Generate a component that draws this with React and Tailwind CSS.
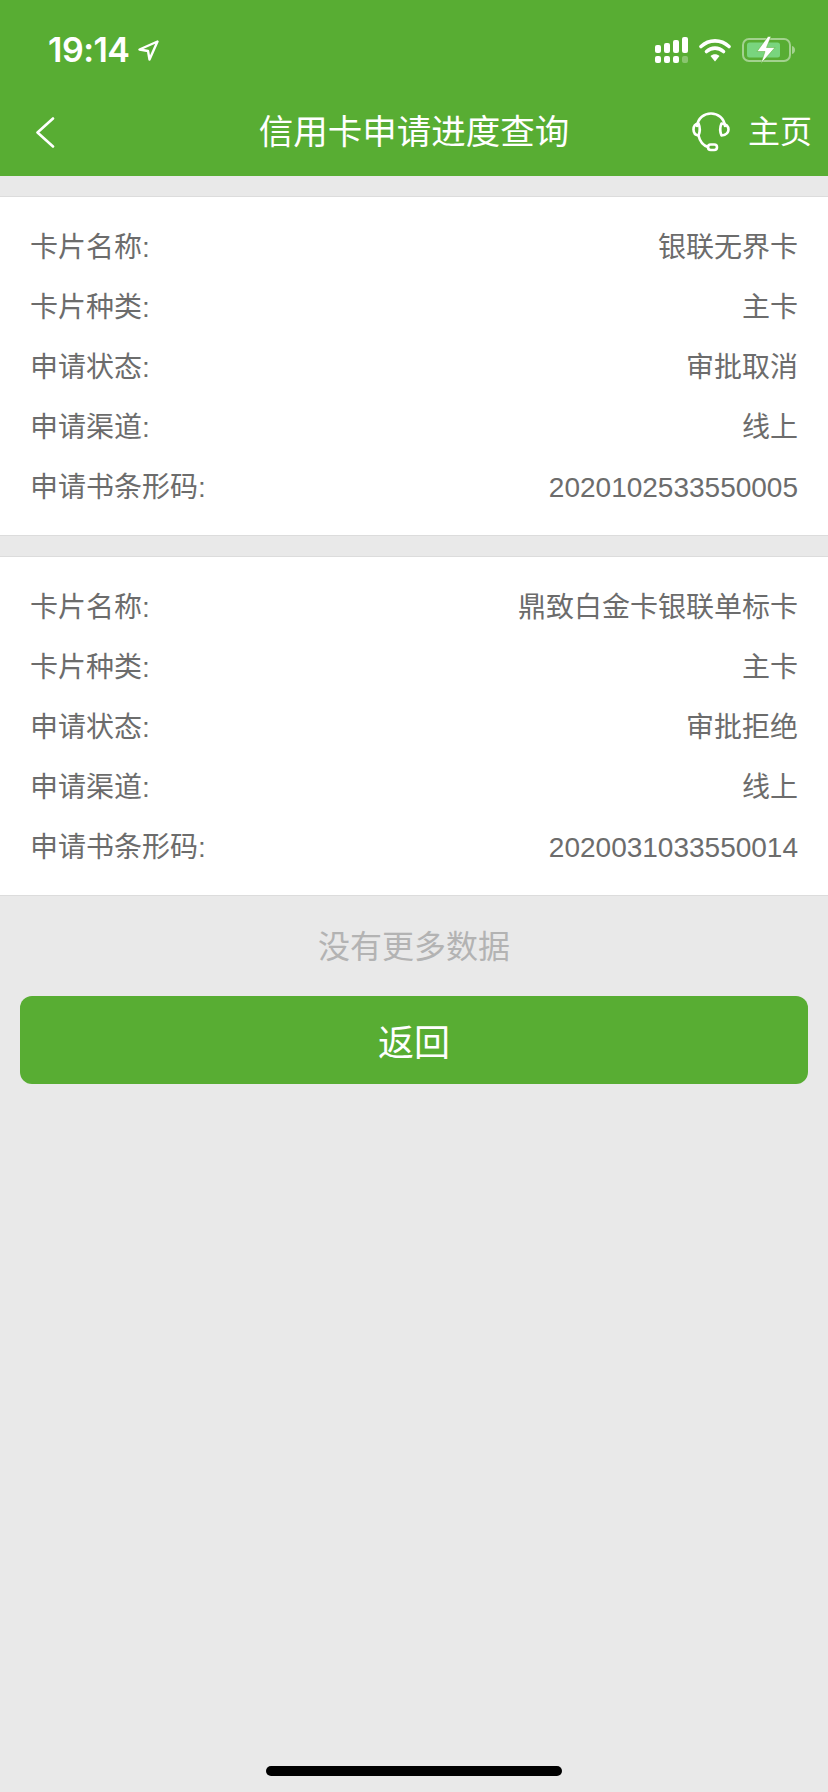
const FONT = "font-['Liberation_Sans','Noto_Sans_CJK_SC',sans-serif]";

function Row({ label, value }) {
  return (
    <div className="flex h-[60px] items-center justify-between pt-[3px] text-[28px] text-[#6c6c6c]">
      <span>{label}</span>
      <span>{value}</span>
    </div>
  );
}

function Card({ rows }) {
  return (
    <section className="border-y border-[#dcdcdc] bg-white px-[30px] py-[19px]">
      {rows.map(([l, v]) => (
        <Row key={l} label={l} value={v} />
      ))}
    </section>
  );
}

function LocationArrow() {
  return (
    <svg width="21" height="21" viewBox="0 0 21 21" fill="none">
      <path d="M19.500 1.500 1.500 9.500l8.500 1.500 1.500 8.500z" stroke="#fff" strokeWidth="2.400" strokeLinejoin="round" />
    </svg>
  );
}

function Signal() {
  const xs = [0, 9, 18, 27];
  const tops = [8, 6, 3, 0];
  return (
    <svg width="33" height="26" viewBox="0 0 33 26">
      {xs.map((x, i) => (
        <rect key={x} x={x} y={tops[i]} width="6" height={16 - tops[i]} rx="2" fill="#fff" />
      ))}
      {xs.map((x, i) => (
        <rect key={x} x={x} y="19" width="6" height="7" rx="2" fill="#fff" fillOpacity={i === 3 ? 0.3 : 1} />
      ))}
    </svg>
  );
}

function Wifi() {
  return (
    <svg width="32" height="24" viewBox="0 0 32 24" fill="none">
      <path d="M2 8.500C10 1 22 1 30 8.500" stroke="#fff" strokeWidth="3.600" strokeLinecap="round" />
      <path d="M7.500 13.500C12.500 9 19.500 9 24.500 13.500" stroke="#fff" strokeWidth="3.600" strokeLinecap="round" />
      <path d="M11.500 18 16 23.500 20.500 18C18 15.800 14 15.800 11.500 18z" fill="#fff" />
    </svg>
  );
}

function Battery() {
  return (
    <svg width="53" height="28" viewBox="0 0 53 28" fill="none">
      <rect x="1" y="3" width="47" height="22" rx="6" stroke="#fff" strokeOpacity="0.45" strokeWidth="2" />
      <rect x="5" y="6.500" width="33" height="15" rx="2.500" fill="#7fdc8c" fillOpacity="0.85" />
      <path d="M50 10c2 .5 3 2 3 4s-1 3.500-3 4z" fill="#fff" fillOpacity="0.45" />
      <path d="M26 0.500 15 15.500h8l-4 12 14-16h-8.500l4.500-11z" fill="#fff" stroke="#58ad33" strokeWidth="0.500" />
    </svg>
  );
}

function Headset() {
  return (
    <svg width="38" height="40" viewBox="0 0 38 40" fill="none" stroke="#fff" strokeWidth="2.600">
      <path d="M5 14C6 6 12 1.500 19 1.500S32 6 33 14" strokeLinecap="round" />
      <path d="M6.500 11.500C3 12 1.500 14 1.500 17.500S3 23 6.500 23.500C8 20 8 15 6.500 11.500z" strokeLinejoin="round" />
      <path d="M29.500 11.500C33.500 12 36.500 14 36.500 17.500S33.500 23 29.500 23.500C28 20 28 15 29.500 11.500z" strokeLinejoin="round" />
      <path d="M6.500 23.500C8 30 11 33.500 16 35" strokeLinecap="round" />
      <rect x="16" y="32.500" width="9" height="5.500" rx="2.750" />
    </svg>
  );
}

function Back() {
  return (
    <svg width="20" height="31" viewBox="0 0 20 31" fill="none">
      <path d="M18 1.500 2.500 15.500 18 29.500" stroke="#fff" strokeWidth="2.600" strokeLinecap="round" strokeLinejoin="round" />
    </svg>
  );
}

const first = [
  ["卡片名称:", "银联无界卡"],
  ["卡片种类:", "主卡"],
  ["申请状态:", "审批取消"],
  ["申请渠道:", "线上"],
  ["申请书条形码:", "2020102533550005"],
];

const second = [
  ["卡片名称:", "鼎致白金卡银联单标卡"],
  ["卡片种类:", "主卡"],
  ["申请状态:", "审批拒绝"],
  ["申请渠道:", "线上"],
  ["申请书条形码:", "2020031033550014"],
];

export default function App() {
  return (
    <div className={`flex min-h-[1792px] w-[828px] flex-col bg-[#e9e9e9] ${FONT}`}>
      <header className="bg-[#58ad33] text-white">
        <div className="flex h-[88px] items-center justify-between pt-[12px] pl-[48px] pr-[33px]">
          <div className="flex items-center gap-[8px]">
            <span className="font-['Inter',sans-serif] text-[34px] font-semibold leading-none tracking-[-0.5px]">19:14</span>
            <LocationArrow />
          </div>
          <div className="flex items-center gap-[11px]">
            <Signal />
            <Wifi />
            <Battery />
          </div>
        </div>
        <div className="grid h-[88px] grid-cols-[minmax(0,1fr)_auto_minmax(0,1fr)] items-center px-[16px]">
          <div className="flex items-center pl-[19px]">
            <Back />
          </div>
          <h1 className="pt-[1px] text-[34.500px] font-normal leading-none">信用卡申请进度查询</h1>
          <div className="flex items-center justify-end gap-[18px]">
            <Headset />
            <span className="text-[32px] leading-none">主页</span>
          </div>
        </div>
      </header>

      <main className="flex flex-col gap-[20px] pt-[20px]">
        <Card rows={first} />
        <Card rows={second} />
      </main>

      <p className="mt-[31px] text-center text-[32px] leading-[40px] text-[#b3b3b3]">没有更多数据</p>

      <div className="mt-[29px] px-[20px]">
        <button className="flex h-[88px] w-full items-center justify-center rounded-[12px] bg-[#58ad33] pt-[8px] text-[36px] text-white">
          返回
        </button>
      </div>

      <div className="mt-auto flex justify-center pb-[16px]">
        <div className="h-[10px] w-[296px] rounded-full bg-black" />
      </div>
    </div>
  );
}
